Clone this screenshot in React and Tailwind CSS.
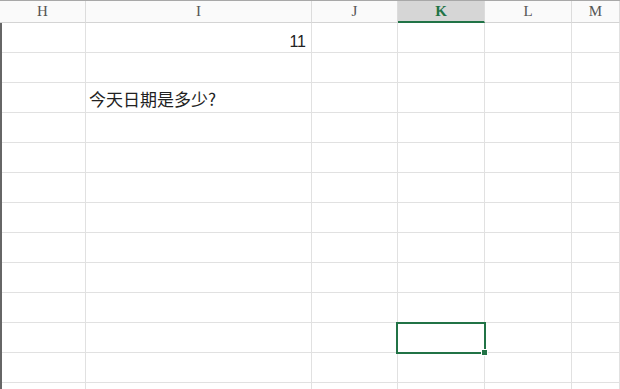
import React from "react";

const cols = [
  { name: "H", w: "w-[86px]" },
  { name: "I", w: "w-[226px]" },
  { name: "J", w: "w-[86px]" },
  { name: "K", w: "w-[87px]", active: true },
  { name: "L", w: "w-[87px]" },
  { name: "M", w: "flex-1" },
];

const rows = Array.from({ length: 13 }, (_, i) => i);

export default function App() {
  return (
    <div className="relative w-[620px] h-[389px] overflow-hidden bg-white" style={{ fontFamily: '"Noto Sans", "Noto Sans CJK SC", sans-serif' }}>
      {/* header */}
      <div className="flex h-[23px] border-t border-[#a8a8a8] bg-[#fafafa]">
        {cols.map((c) => (
          <div
            key={c.name}
            className={`${c.w} shrink-0 flex items-center justify-center border-r border-[#dcdcdc] text-[15px] ${
              c.active
                ? "bg-[#d6d6d6] border-b-2 border-b-[#217346] text-[#217346] font-bold"
                : "border-b border-b-[#d4d4d4] text-[#555]"
            }`}
            style={{ fontFamily: '"Liberation Serif", serif' }}
          >
            {c.name}
          </div>
        ))}
      </div>
      {/* body */}
      <div className="border-l-2 border-[#666]">
        {rows.map((r) => (
          <div key={r} className="flex h-[30px]">
            {cols.map((c, ci) => (
              <div
                key={c.name}
                className={`${ci === 0 ? "w-[84px]" : c.w} shrink-0 border-r border-b border-[#e1e1e1] flex items-end`}
              >
                {r === 0 && c.name === "I" && (
                  <span className="ml-auto pr-[5px] text-[16px] leading-[20px] text-[#222]" style={{ fontFamily: '"Liberation Sans", sans-serif' }}>
                    11
                  </span>
                )}
                {r === 2 && c.name === "I" && (
                  <span className="pl-[3px] pb-[1px] text-[17px] text-[#222] leading-[24px]" style={{ fontFamily: '"Noto Sans CJK SC", sans-serif' }}>
                    今天日期是多少?
                  </span>
                )}
              </div>
            ))}
          </div>
        ))}
      </div>
      {/* selection */}
      <div className="absolute left-[396px] top-[322px] w-[90px] h-[32px] border-2 border-[#217346]">
        <div className="absolute -right-[4px] -bottom-[4px] w-[7px] h-[7px] bg-[#217346] border border-white" />
      </div>
    </div>
  );
}
